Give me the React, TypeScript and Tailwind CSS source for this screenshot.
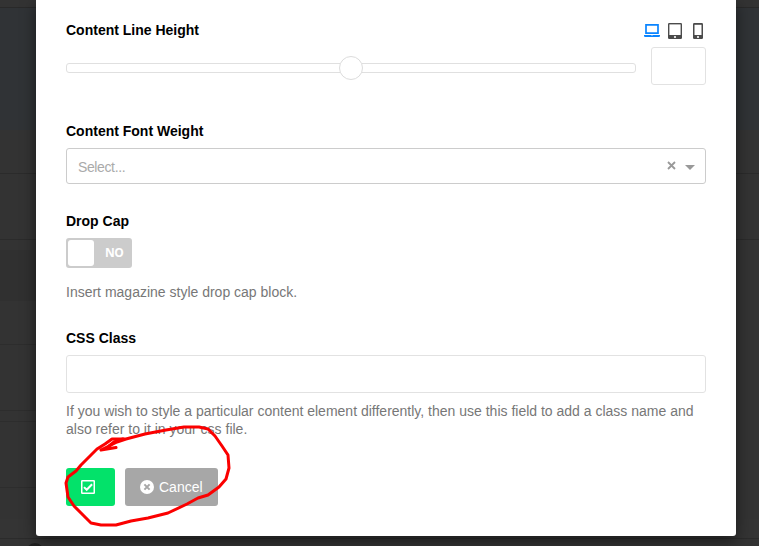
import React from 'react';

function Label({ children }: { children: React.ReactNode }) {
  return <div className="h-[18px] text-[14px] leading-[18px] font-bold whitespace-nowrap text-black">{children}</div>;
}

function Backdrop() {
  return (
    <div className="absolute inset-0 flex flex-col bg-[#333333]">
      <div className="h-2 shrink-0 border-b border-[#292929]" />
      <div className="h-[122px] shrink-0 bg-[#303336]" />
      <div className="h-11 shrink-0 border-b border-[#2b2b2b]" />
      <div className="h-[66px] shrink-0 border-b border-[#2b2b2b]" />
      <div className="flex h-[279px] shrink-0">
        <div className="w-1/2">
          <div className="h-[10px]" />
          <div className="h-[51px] bg-[#303030]" />
          <div className="h-11 border-b border-[#2d2d2d]" />
          <div className="h-[66px] border-b border-[#2d2d2d]" />
          <div className="h-[11px] border-b border-[#2d2d2d]" />
          <div className="h-[66px] border-b border-[#2d2d2d]" />
          <div className="h-[31px]" />
        </div>
      </div>
      <div className="h-5 shrink-0 border-b border-[#2b2b2b] bg-[#343434]" />
      <div className="flex-1 pt-[4px] pl-[26px]">
        <div className="h-3 w-[18px] rounded-t-full bg-[#202020]" />
      </div>
    </div>
  );
}

function Devices() {
  return (
    <div className="flex h-[18px] items-center">
      <svg width="16" height="16" viewBox="0 0 16 16" className="mt-[2px] mr-2">
        <path d="M2 1.8h12v8.4H2z" fill="none" stroke="#0a84ff" strokeWidth="1.7" />
        <path d="M0 12h16v.9q0 1.1-1.3 1.1H1.3Q0 14 0 12.9z" fill="#0a84ff" />
        <path d="M7 12.2h2v.6H7z" fill="#9dceff" />
      </svg>
      <svg width="14" height="16" viewBox="0 0 14 16" className="mt-[2px] mr-[11px]">
        <rect width="14" height="16" rx="1.2" fill="#4b4b4b" />
        <path d="M1.4 1.4h11.2v10.6H1.4z" fill="#fff" />
        <circle cx="7" cy="14" r="1.1" fill="#fff" />
      </svg>
      <svg width="10" height="16" viewBox="0 0 10 16" className="mt-[2px] mr-[3px]">
        <rect width="10" height="16" rx="1.2" fill="#4b4b4b" />
        <path d="M1.5 1.8h7v10.2h-7z" fill="#fff" />
        <circle cx="5" cy="14" r="1.1" fill="#fff" />
      </svg>
    </div>
  );
}

export default function App() {
  return (
    <div className="relative h-[546px] w-[759px] overflow-hidden font-['Liberation_Sans',Arial,sans-serif]">
      <Backdrop />
      <main className="relative ml-9 h-[536px] w-[700px] rounded-b-[3px] bg-white px-[30px] pt-[21px] shadow-[0_5px_15px_rgba(0,0,0,0.5)]">
        <div className="flex justify-between">
          <Label>Content Line Height</Label>
          <Devices />
        </div>
        <div className="mt-2 flex h-[38px] items-center gap-[15px]">
          <div className="mt-[3px] flex h-[10px] w-[570px] items-center justify-center rounded-[3px] border border-[#e0e0e0]">
            <div className="size-6 shrink-0 rounded-full border border-[#dcdcdc] bg-white" />
          </div>
          <div className="h-[38px] w-[55px] rounded-[3px] border border-[#e2e2e2]" />
        </div>

        <div className="mt-[37px]"><Label>Content Font Weight</Label></div>
        <div className="mt-2 flex h-9 items-center rounded-[3px] border border-[#cccccc] pr-[10px] pl-[11px]">
          <span className="flex-1 pt-[2px] text-[14px] tracking-[-0.38px] text-[#aaaaaa]">Select...</span>
          <svg width="9" height="9" viewBox="0 0 9 9" className="mr-[9px] mb-[2px]">
            <path d="M1 1l7 7M8 1L1 8" stroke="#999" strokeWidth="1.8" />
          </svg>
          <svg width="10" height="5" viewBox="0 0 10 5" className="mt-[3px]"><path d="M0 0h10L5 5z" fill="#999" /></svg>
        </div>

        <div className="mt-7"><Label>Drop Cap</Label></div>
        <div className="mt-2 flex h-[30px] w-[66px] items-center rounded-[3px] bg-[#cccccc] pl-[2px]">
          <div className="h-[26px] w-[26px] rounded-[3px] bg-white" />
          <span className="ml-[11px] font-['Open_Sans',sans-serif] text-[12px] leading-4 font-bold tracking-[-0.6px] text-white">NO</span>
        </div>
        <p className="mt-[15px] text-[14px] leading-[18px] text-[#777777]">Insert magazine style drop cap block.</p>

        <div className="mt-7"><Label>CSS Class</Label></div>
        <div className="mt-2 h-[38px] rounded-[3px] border border-[#e2e2e2]" />
        <p className="mt-[9px] text-[14px] leading-[18px] text-[#777777]">
          If you wish to style a particular content element differently, then use this field to add a class name and also refer to it in your css file.
        </p>
        <div className="mt-[30px] flex gap-[10px]">
          <button className="flex h-[38px] w-[49px] items-center rounded-[3px] bg-[#03e26a] pl-[15px]">
            <svg width="14" height="14" viewBox="0 0 14 14" fill="none" stroke="#fff">
              <rect x=".75" y=".75" width="12.5" height="12.5" rx=".5" strokeWidth="1.5" />
              <path d="M3 7.1l2.7 2.7 5.4-5.5" strokeWidth="2" />
            </svg>
          </button>
          <button className="flex h-[38px] w-[93px] items-center rounded-[3px] bg-[#a7a7a7] pl-[15px] text-[14px] text-white">
            <svg width="14" height="14" viewBox="0 0 14 14" className="mr-[5px]">
              <circle cx="7" cy="7" r="7" fill="#fff" />
              <path d="M4.4 4.4l5.2 5.2M9.6 4.4L4.4 9.6" stroke="#a7a7a7" strokeWidth="2" />
            </svg>
            Cancel
          </button>
        </div>
      </main>
      <svg className="absolute top-[420px] left-[60px]" width="180" height="110" viewBox="60 420 180 110" fill="none" stroke="#fb0000" strokeWidth="3" strokeLinejoin="round" strokeLinecap="round">
        <path d="M126 439L112 439L105 444L97 449L87 459L81 465L76 471L68 477L66 483L67 490L68 497L74 506L84 516L91 523L101 525L116 525L131 521L148 518L168 513L187 504L198 498L208 495L219 487L226 479L229 468L228 455L222 446L215 436L208 429L199 427L184 427L166 430L145 434L126 439L117 442L101 450L116 447.500" />
        <path d="M123 439L114 442L109 446" />
      </svg>
    </div>
  );
}
